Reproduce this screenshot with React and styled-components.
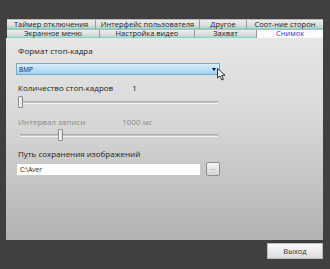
import React from 'react'
import styled, { createGlobalStyle } from 'styled-components'

const Global = createGlobalStyle`
    html, body {
        margin: 0;
        padding: 0;
        background: #404040;
    }
    * {
        box-sizing: border-box;
    }
`

const Window = styled.div`
    width: 330px;
    height: 269px;
    background: #404040;
    padding: 19px 7px 10px 6px;
    display: flex;
    flex-direction: column;
    font-family: "Open Sans", "DejaVu Sans", sans-serif;
    font-size: 7.5px;
    color: #222;
`

const TabRow = styled.div`
    display: flex;
    height: ${p => p.h}px;
    padding-left: 1px;
`

const Tab = styled.div`
    width: ${p => p.w}px;
    flex: ${p => (p.grow ? 1 : 'none')};
    display: flex;
    align-items: center;
    justify-content: center;
    border-right: 1px solid #9a9a9a;
    border-top: 1px solid #b8b8b8;
    background: ${p => (p.active
        ? '#fbfbfb'
        : 'linear-gradient(#ececec 0%, #dcdcdc 60%, #a6dcd2 85%, #7fcabd 100%)')};
    color: ${p => (p.active ? '#2b3fd0' : '#222')};
    white-space: nowrap;
    line-height: 1;
    &:last-child {
        border-right: none;
    }
`

const Panel = styled.div`
    flex: 1;
    background: linear-gradient(#e6e6e6 0%, #d8d8d8 40%, #b2b2b2 100%);
    padding: 5px 10px 0 10px;
    display: flex;
    flex-direction: column;
`

const Label = styled.div`
    height: 14px;
    display: flex;
    align-items: center;
    padding-left: 2px;
    font-size: 8px;
    color: ${p => (p.muted ? '#8a8a8a' : '#222')};
    margin-top: ${p => p.mt || 0}px;
`

const Value = styled.span`
    margin-left: ${p => p.ml}px;
`

const Select = styled.div`
    margin-top: 6px;
    width: 204px;
    height: 12px;
    border: 1px solid #7aa9c8;
    background: linear-gradient(#d6ecfb 0%, #bfe0f7 50%, #9fd0f1 100%);
    display: flex;
    align-items: center;
    justify-content: space-between;
    padding: 0 3px 0 2px;
    font-size: 6.5px;
    position: relative;
`

const Arrow = styled.div`
    width: 0;
    height: 0;
    border-left: 2.5px solid transparent;
    border-right: 2.5px solid transparent;
    border-top: 3px solid #111;
`

const Cursor = styled.svg`
    position: absolute;
    left: 200px;
    top: 4px;
`

const Slider = styled.div`
    position: relative;
    height: 12px;
    width: ${p => p.w}px;
    margin-left: ${p => p.ml || 0}px;
    margin-top: ${p => p.mt || 0}px;
`

const Track = styled.div`
    position: absolute;
    left: 0;
    right: 0;
    top: 5px;
    height: 3px;
    background: #c4c4c4;
    border-top: 1px solid #aaa;
    border-bottom: 1px solid #f4f4f4;
`

const Thumb = styled.div`
    position: absolute;
    left: ${p => p.x}px;
    top: 0;
    width: 5px;
    height: 12px;
    border: 1px solid #8c8c8c;
    border-radius: 1px;
    background: linear-gradient(90deg, #fdfdfd, #dedede);
`

const PathRow = styled.div`
    display: flex;
    align-items: center;
    gap: 5px;
    margin-top: 2px;
`

const Input = styled.div`
    width: 185px;
    height: 13px;
    background: #fff;
    border: 1px solid #c8c8c8;
    display: flex;
    align-items: center;
    padding-left: 3px;
    font-size: 6.5px;
`

const SmallButton = styled.div`
    width: 14px;
    height: 14px;
    border: 1px solid #8e8e8e;
    border-radius: 2px;
    background: linear-gradient(#f6f6f6, #d4d4d4);
    display: flex;
    align-items: center;
    justify-content: center;
    font-size: 6px;
    color: #444;
    padding-bottom: 2px;
`

const Footer = styled.div`
    display: flex;
    justify-content: flex-end;
    padding-top: 3px;
`

const ExitButton = styled.div`
    width: 56px;
    height: 16px;
    background: linear-gradient(#fafafa, #dcdcdc);
    border: 1px solid #bdbdbd;
    display: flex;
    align-items: center;
    justify-content: center;
    color: #333;
`

const row1 = [
    { t: 'Таймер отключения', w: 89 },
    { t: 'Интерфейс пользователя', w: 104 },
    { t: 'Другое', w: 47 },
    { t: 'Соот-ние сторон', grow: true },
]

const row2 = [
    { t: 'Экранное меню', w: 93 },
    { t: 'Настройка видео', w: 95 },
    { t: 'Захват', w: 62 },
    { t: 'Снимок', grow: true, active: true },
]

export default function App() {
    return (
        <>
            <Global />
            <Window>
                <TabRow h={10}>
                    {row1.map(tab => (
                        <Tab key={tab.t} w={tab.w} grow={tab.grow}>{tab.t}</Tab>
                    ))}
                </TabRow>
                <TabRow h={9}>
                    {row2.map(tab => (
                        <Tab key={tab.t} w={tab.w} grow={tab.grow} active={tab.active}>{tab.t}</Tab>
                    ))}
                </TabRow>
                <Panel>
                    <Label>Формат стоп-кадра</Label>
                    <Select>
                        <span>BMP</span>
                        <Arrow />
                        <Cursor width="9" height="13" viewBox="0 0 9 13">
                            <path d="M0.5 0.5 L0.5 10 L3 7.8 L4.8 12 L6.4 11.3 L4.7 7.3 L8 7.3 Z" fill="#fff" stroke="#000" strokeWidth="0.8" />
                        </Cursor>
                    </Select>
                    <Label mt={5}>
                        Количество стоп-кадров<Value ml={19}>1</Value>
                    </Label>
                    <Slider w={200} ml={2} mt={2}>
                        <Track />
                        <Thumb x={0} />
                    </Slider>
                    <Label muted mt={6}>
                        Интервал записи<Value ml={37}>1000 мс</Value>
                    </Label>
                    <Slider w={198} ml={4} mt={1}>
                        <Track />
                        <Thumb x={38} />
                    </Slider>
                    <Label mt={5}>Путь сохранения изображений</Label>
                    <PathRow>
                        <Input>C:\Aver</Input>
                        <SmallButton>...</SmallButton>
                    </PathRow>
                </Panel>
                <Footer>
                    <ExitButton>Выход</ExitButton>
                </Footer>
            </Window>
        </>
    )
}
